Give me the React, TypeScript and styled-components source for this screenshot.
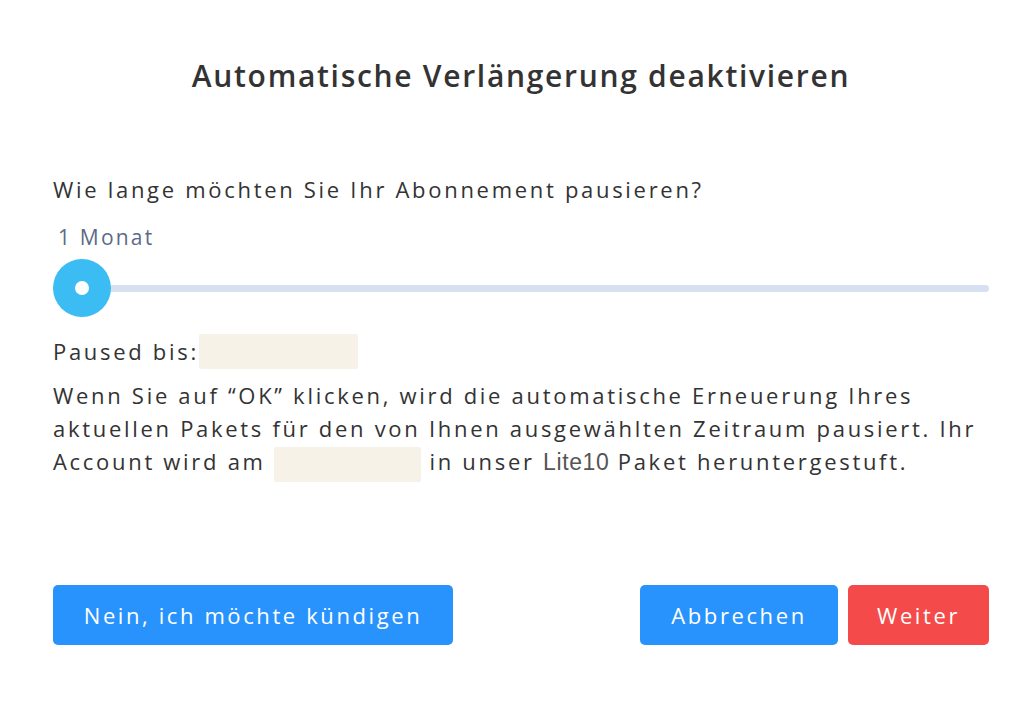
import React from "react";
import styled, { createGlobalStyle } from "styled-components";

const Global = createGlobalStyle`
  html, body {
    margin: 0;
    padding: 0;
    background: #fff;
  }
  body {
    font-family: "Open Sans", "Lato", sans-serif;
    color: #333;
  }
`;

const Dialog = styled.div`
  width: 1032px;
  height: 704px;
  box-sizing: border-box;
  padding: 54px 43px 0 53px;
  display: flex;
  flex-direction: column;
`;

const Title = styled.h1`
  margin: 0;
  font-size: 30px;
  font-weight: 600;
  letter-spacing: 1.7px;
  text-align: center;
  color: #333;
  line-height: 44px;
`;

const Question = styled.p`
  margin: 77px 0 0;
  font-size: 22px;
  letter-spacing: 2.7px;
  line-height: 28px;
`;

const SliderLabel = styled.div`
  margin: 20px 0 0 5px;
  font-size: 21px;
  letter-spacing: 2.2px;
  color: #5b6b87;
  line-height: 28px;
`;

const Slider = styled.div`
  position: relative;
  height: 58px;
  margin-top: 8px;
  display: flex;
  align-items: center;
`;

const Track = styled.div`
  flex: 1;
  height: 7px;
  border-radius: 4px;
  background: #d6e0f1;
`;

const Thumb = styled.div`
  position: absolute;
  left: 0;
  top: 0;
  width: 58px;
  height: 58px;
  border-radius: 50%;
  background: #3bbcf2;
  display: flex;
  align-items: center;
  justify-content: center;
  &::after {
    content: "";
    width: 14px;
    height: 14px;
    border-radius: 50%;
    background: #fff;
  }
`;

const Paused = styled.div`
  margin-top: 17px;
  display: flex;
  align-items: center;
  font-size: 22px;
  letter-spacing: 2.7px;
  line-height: 33px;
`;

const Blank = styled.span<{ $w: number }>`
  display: inline-block;
  width: ${(p) => p.$w}px;
  height: 35px;
  vertical-align: middle;
  background: #f6f2e8;
  border-radius: 2px;
`;

const Body = styled.p`
  margin: 10px 0 0;
  font-size: 22px;
  letter-spacing: 2.7px;
  line-height: 33px;
`;

const Product = styled.span`
  font-family: "Liberation Sans", Arial, sans-serif;
  font-size: 23px;
  line-height: 1;
  letter-spacing: 0.6px;
  color: #555;
`;

const Actions = styled.div`
  margin-top: 103px;
  display: flex;
  align-items: center;
  gap: 10px;
`;

const Spacer = styled.div`
  flex: 1;
`;

const Button = styled.button<{ $tone: "blue" | "red"; $w: number }>`
  width: ${(p) => p.$w}px;
  height: 60px;
  border: none;
  border-radius: 5px;
  background: ${(p) => (p.$tone === "red" ? "#f54a4a" : "#2993fd")};
  color: #fff;
  font-family: "Open Sans", sans-serif;
  font-size: 22px;
  letter-spacing: 2.6px;
  cursor: pointer;
`;

export default function App() {
  return (
    <>
      <Global />
      <Dialog>
        <Title>Automatische Verlängerung deaktivieren</Title>
        <Question>Wie lange möchten Sie Ihr Abonnement pausieren?</Question>
        <SliderLabel>1 Monat</SliderLabel>
        <Slider>
          <Track />
          <Thumb />
        </Slider>
        <Paused>
          Paused bis:
          <Blank $w={159} />
        </Paused>
        <Body>
          Wenn Sie auf “OK” klicken, wird die automatische Erneuerung Ihres
          aktuellen Pakets für den von Ihnen ausgewählten Zeitraum pausiert. Ihr
          Account wird am <Blank $w={147} /> in unser <Product>Lite10</Product>{" "}
          Paket heruntergestuft.
        </Body>
        <Actions>
          <Button $tone="blue" $w={400}>Nein, ich möchte kündigen</Button>
          <Spacer />
          <Button $tone="blue" $w={198}>Abbrechen</Button>
          <Button $tone="red" $w={141}>Weiter</Button>
        </Actions>
      </Dialog>
    </>
  );
}
